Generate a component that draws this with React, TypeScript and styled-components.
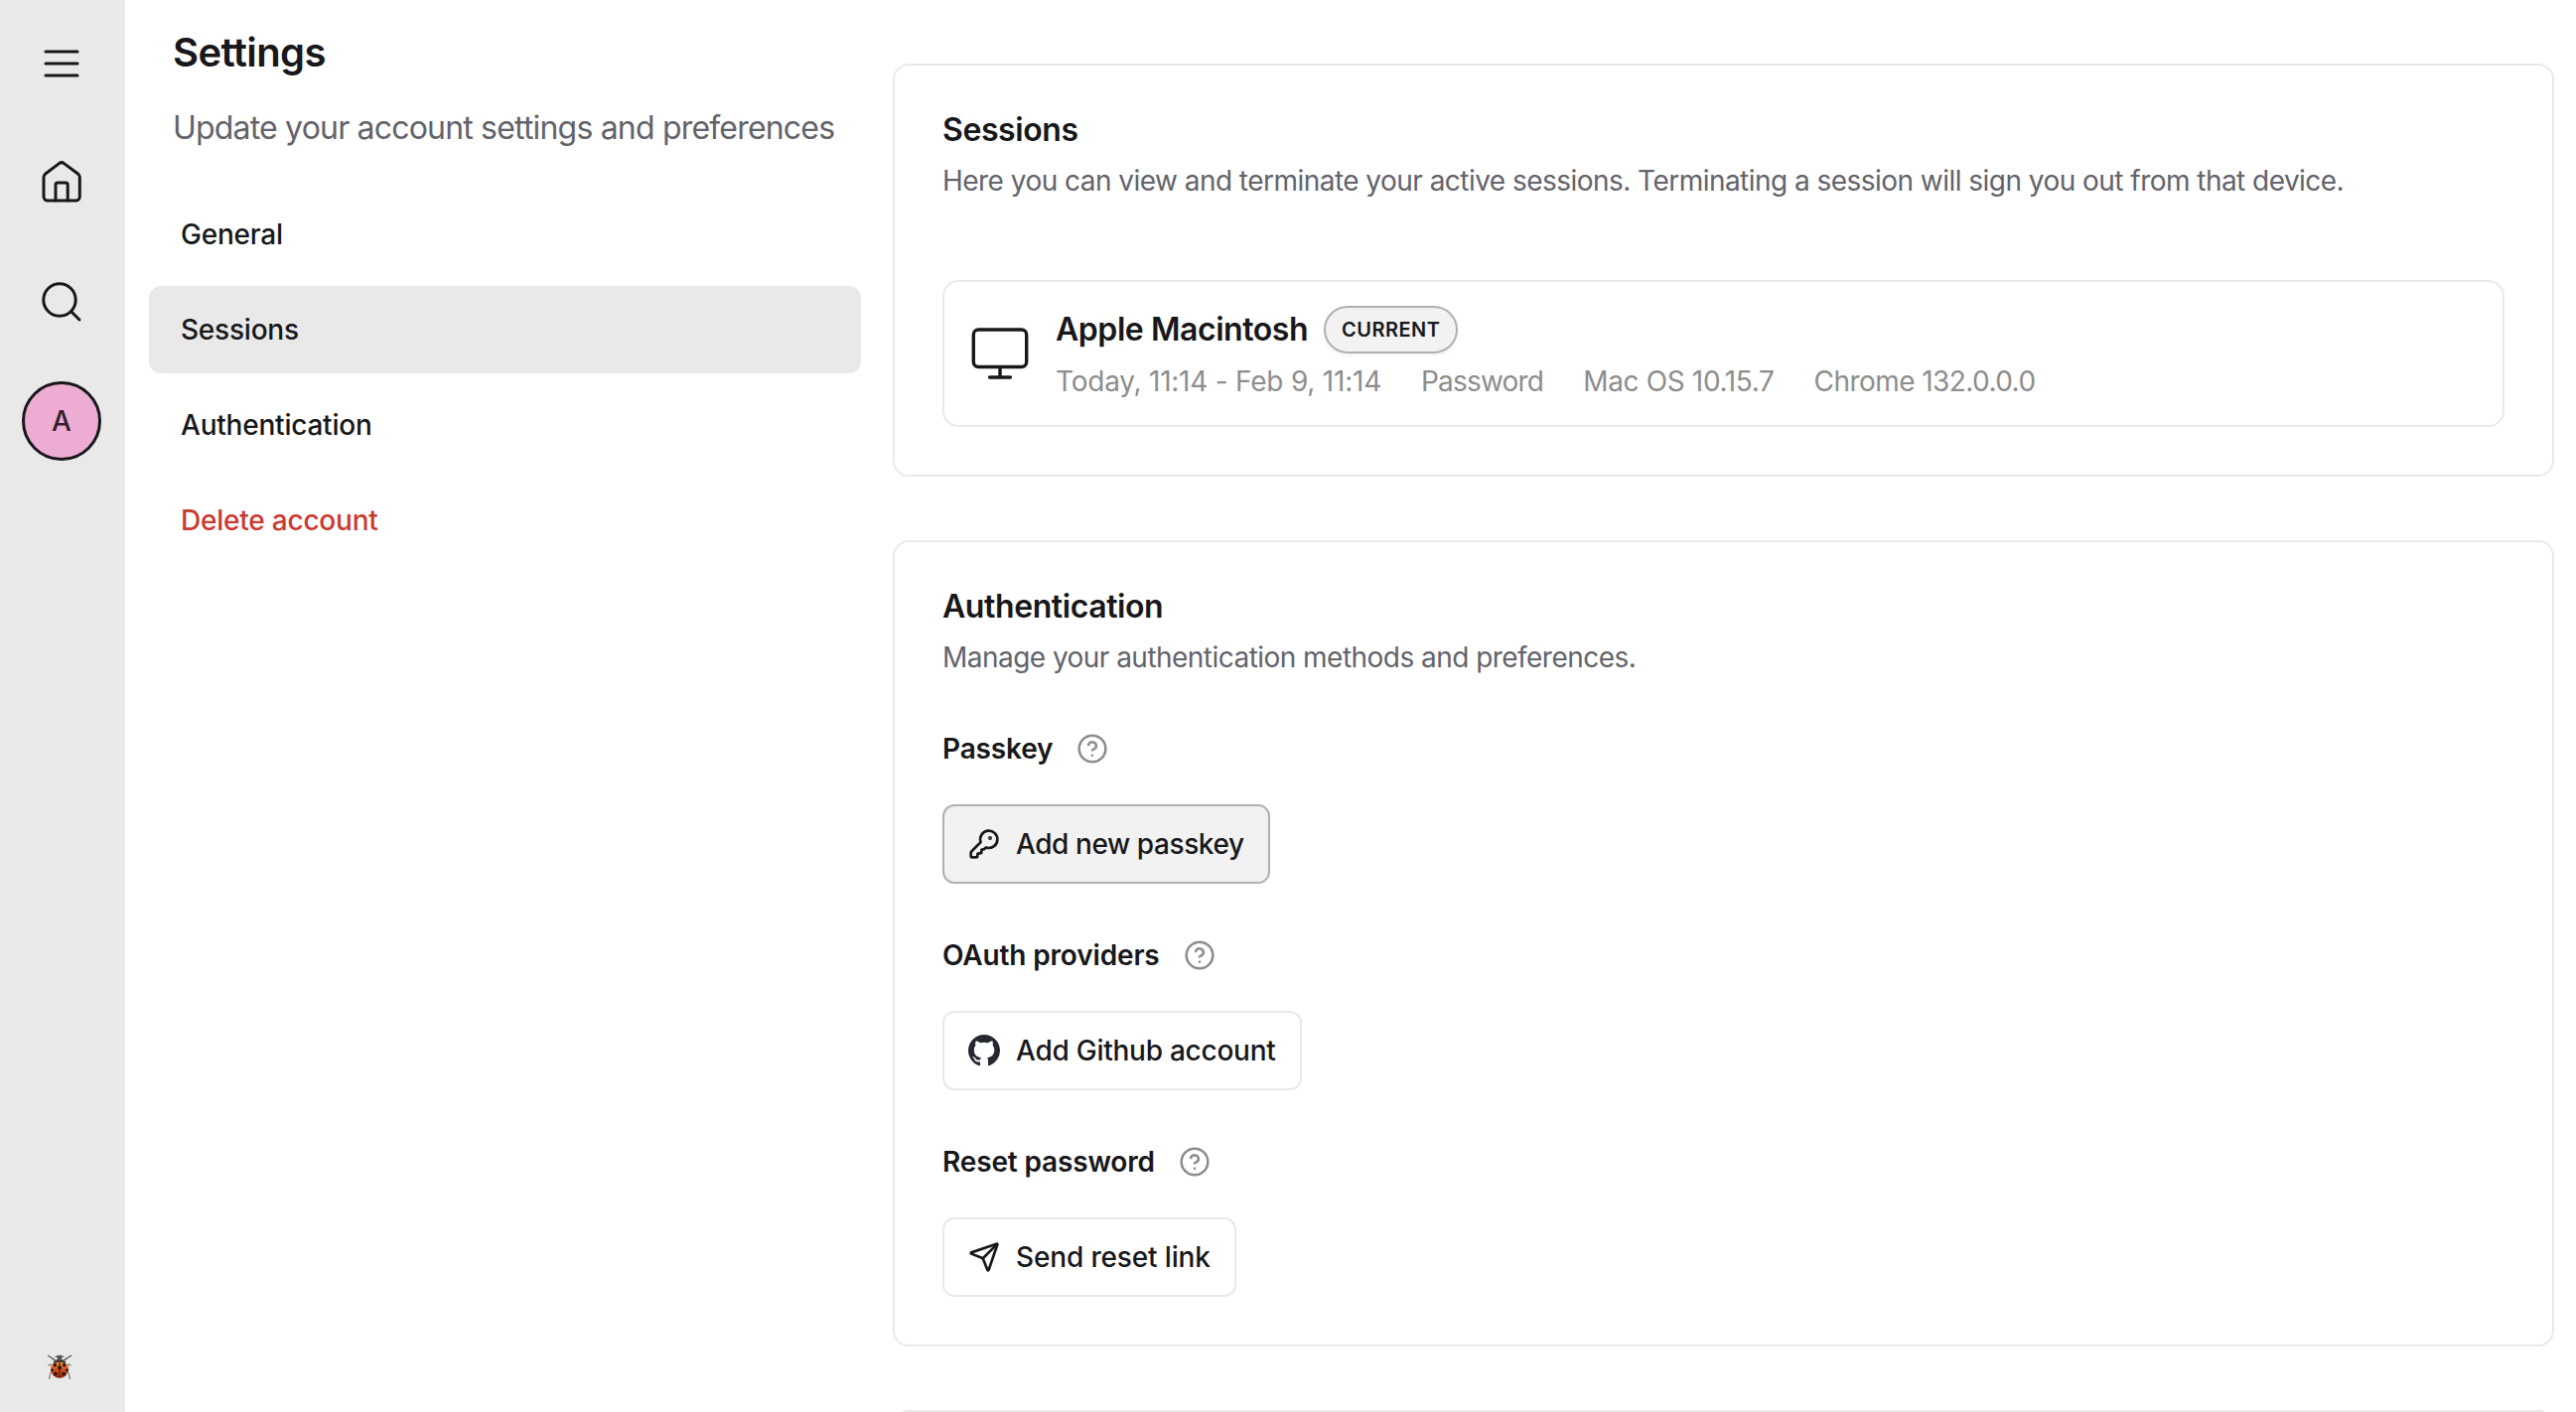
import React from 'react';
import styled, { createGlobalStyle } from 'styled-components';
import { CircleHelp, KeyRound, Send } from 'lucide-react';

const GlobalStyle = createGlobalStyle`
  * { box-sizing: border-box; }
  html, body { margin: 0; padding: 0; background: #fff; overflow: hidden; }
  body { font-family: Inter, "Liberation Sans", sans-serif; color: #18181b; -webkit-font-smoothing: antialiased; }
`;

const Page = styled.div`
  display: flex;
  width: 100vw;
  height: 100vh;
  overflow: hidden;
`;

const Rail = styled.nav`
  width: 126px;
  flex: none;
  padding: 40px 2px 20px 0;
  background: #e9e9e9;
  display: flex;
  flex-direction: column;
  align-items: center;
`;

const RailButton = styled.div<{ $gap: number }>`
  width: 48px;
  height: 48px;
  margin-bottom: ${(p) => p.$gap}px;
  svg { display: block; }
`;

const Avatar = styled.div`
  width: 80px;
  height: 80px;
  border: 3px solid #18181b;
  border-radius: 50%;
  background: #edadd3;
  color: #33202c;
  display: flex;
  align-items: center;
  justify-content: center;
  font-size: 28px;
  font-weight: 500;
`;

const Bug = styled.div`
  width: 26px;
  height: 26px;
  margin: auto 4px 12px 0;
  svg { display: block; }
`;

const Side = styled.aside`
  width: 741px;
  flex: none;
  padding: 22px 0 0 24px;
`;

const Heading = styled.h1`
  margin: 0 0 0 24px;
  font-size: 40px;
  line-height: 61px;
  font-weight: 600;
  letter-spacing: -0.6px;
`;

const Lead = styled.p`
  margin: 21px 0 0 24px;
  font-size: 32px;
  line-height: 49px;
  letter-spacing: -0.81px;
  color: #63636b;
  white-space: nowrap;
`;

const Menu = styled.div`
  display: flex;
  flex-direction: column;
  gap: 8px;
  margin-top: 39px;
`;

const MenuItem = styled.div<{ $active?: boolean; $danger?: boolean }>`
  height: 88px;
  padding: 0 32px;
  border-radius: 12px;
  display: flex;
  align-items: center;
  font-size: 28px;
  font-weight: 500;
  letter-spacing: -0.22px;
  background: ${(p) => (p.$active ? '#e9e9e9' : 'transparent')};
  color: ${(p) => (p.$danger ? '#ca3a31' : '#18181b')};
`;

const Content = styled.main`
  flex: 1;
  min-width: 0;
  padding: 64px 22px 0 32px;
  display: flex;
  flex-direction: column;
  gap: 64px;
`;

const Card = styled.section<{ $height: number }>`
  flex: none;
  height: ${(p) => p.$height}px;
  border: 2px solid #e9e9e9;
  border-radius: 16px;
  padding: 40px 48px;
`;

const CardTitle = styled.h2`
  margin: 0;
  font-size: 32px;
  line-height: 49px;
  font-weight: 600;
  letter-spacing: -0.42px;
`;

const CardText = styled.p`
  margin: 6px 0 0;
  font-size: 28px;
  line-height: 42px;
  letter-spacing: -0.535px;
  color: #63636b;
  white-space: nowrap;
`;

const SessionRow = styled.div`
  margin-top: 79px;
  height: 148px;
  border: 2px solid #e9e9e9;
  border-radius: 16px;
  padding: 0 24px;
  display: flex;
  align-items: center;
  gap: 24px;
  svg { display: block; flex: none; }
`;

const SessionBody = styled.div`
  display: flex;
  flex-direction: column;
  gap: 7px;
`;

const SessionHead = styled.div`
  display: flex;
  align-items: flex-end;
  gap: 16px;
`;

const Device = styled.span`
  font-size: 32px;
  line-height: 49px;
  font-weight: 600;
  letter-spacing: -0.44px;
`;

const Badge = styled.span`
  height: 48px;
  padding: 0 16px;
  border: 2px solid #b1b1b1;
  border-radius: 24px;
  background: #f2f2f2;
  box-shadow: 0 2px 4px rgba(0, 0, 0, 0.06);
  display: flex;
  align-items: center;
  font-size: 20px;
  font-weight: 600;
  letter-spacing: 0.45px;
`;

const Meta = styled.div`
  display: flex;
  gap: 40px;
  font-size: 28px;
  line-height: 42px;
  color: #8d8d8d;
  white-space: nowrap;
`;

const MetaItem = styled.span<{ $tracking: number }>`
  letter-spacing: ${(p) => p.$tracking}px;
`;

const Field = styled.div<{ $top: number }>`
  margin-top: ${(p) => p.$top}px;
  height: 158px;
  display: flex;
  flex-direction: column;
  justify-content: space-between;
  align-items: flex-start;
`;

const Label = styled.div`
  height: 44px;
  display: flex;
  align-items: center;
  gap: 24px;
  font-size: 28px;
  font-weight: 600;
  letter-spacing: -0.15px;
  svg { color: #8d8d8d; }
`;

const Button = styled.button<{ $hover?: boolean; $tracking: number }>`
  height: 80px;
  padding: 0 24px;
  border: 2px solid ${(p) => (p.$hover ? '#b1b1b1' : '#e9e9e9')};
  border-radius: 12px;
  background: ${(p) => (p.$hover ? '#f2f2f2' : '#fff')};
  color: #18181b;
  display: flex;
  align-items: center;
  gap: 16px;
  font-family: inherit;
  font-size: 28px;
  font-weight: 500;
  letter-spacing: ${(p) => p.$tracking}px;
  white-space: nowrap;
`;

const stroke = { fill: 'none', stroke: '#18181b', strokeLinecap: 'round', strokeLinejoin: 'round' } as const;

const MenuIcon = () => (
  <svg width="48" height="48" viewBox="0 0 48 48" {...stroke} strokeWidth="3">
    <path d="M8 12H40M8 24H40M8 36H40" />
  </svg>
);

const HomeIcon = () => (
  <svg width="48" height="48" viewBox="0 0 48 48" {...stroke} strokeWidth="3">
    <path d="M6 18.4a4 4 0 0 1 1.5-3.1L21.5 4.6a4 4 0 0 1 5 0L40.8 15.3a4 4 0 0 1 1.5 3.1V38a4 4 0 0 1-4 4H10a4 4 0 0 1-4-4z" />
    <path d="M18 42V26a2 2 0 0 1 2-2h8.200a2 2 0 0 1 2 2v16" />
  </svg>
);

const SearchIcon = () => (
  <svg width="48" height="48" viewBox="0 0 48 48" {...stroke} strokeWidth="3">
    <circle cx="22" cy="22" r="16.200" />
    <path d="M34 34L42 42" />
  </svg>
);

const MonitorIcon = () => (
  <svg width="64" height="64" viewBox="0 0 64 64" {...stroke} strokeWidth="3.400">
    <rect x="5.300" y="8" width="53.400" height="37.500" rx="5" />
    <path d="M32 46V56M21.500 56H42.500" />
  </svg>
);

const GithubIcon = () => (
  <svg width="32" height="32" viewBox="0 0 16 16" fill="#24292f">
    <path d="M8 0C3.580 0 0 3.580 0 8c0 3.540 2.290 6.530 5.470 7.590.4.070.550-.170.550-.380 0-.190-.010-.820-.010-1.490-2.010.370-2.530-.490-2.690-.940-.090-.230-.480-.940-.820-1.130-.280-.150-.680-.520-.010-.530.630-.010 1.080.580 1.230.820.720 1.210 1.870.870 2.330.660.070-.520.280-.870.510-1.070-1.780-.200-3.640-.890-3.640-3.950 0-.870.310-1.590.820-2.150-.080-.200-.360-1.020.080-2.120 0 0 .670-.210 2.200.820.640-.180 1.320-.270 2-.270s1.360.090 2 .270c1.530-1.040 2.200-.820 2.200-.820.440 1.100.160 1.920.080 2.120.510.560.820 1.270.820 2.150 0 3.070-1.870 3.750-3.650 3.950.290.250.540.730.540 1.480 0 1.070-.010 1.930-.010 2.200 0 .210.150.460.550.380A8.010 8.010 0 0 0 16 8c0-4.420-3.580-8-8-8z" />
  </svg>
);

const LadybugIcon = () => (
  <svg width="26" height="26" viewBox="0 0 26 26" fill="none">
    <defs>
      <linearGradient id="shell" x1="0" y1="0" x2="0" y2="1">
        <stop offset="0" stopColor="#e39a3c" />
        <stop offset="0.450" stopColor="#d95a22" />
        <stop offset="1" stopColor="#8e1f0c" />
      </linearGradient>
    </defs>
    <path d="M8.500 6.500L5 3.500 1 1M17.500 6.500L21 3.500 25 1" stroke="#55585c" strokeWidth="1.300" />
    <path d="M5 10L1.500 11M21 10l3.500 1M5 17l-1.500 3L2.500 25M21 17l1.500 3 1 5" stroke="#85898e" strokeWidth="1.400" />
    <ellipse cx="13" cy="4.500" rx="5.500" ry="3.800" fill="#50565c" />
    <circle cx="9.300" cy="4" r="1.500" fill="#eee" />
    <circle cx="16.700" cy="4" r="1.500" fill="#eee" />
    <ellipse cx="13" cy="15" rx="9" ry="8.800" fill="url(#shell)" />
    <path d="M7 8.300Q13 5.500 19 8.300" stroke="#3b332c" strokeWidth="1.600" />
    <path d="M13 8V23.500" stroke="#5b1c0c" strokeWidth="1" />
    <g fill="#20150f">
      <circle cx="13" cy="13.500" r="2" />
      <circle cx="8.300" cy="10.800" r="1.700" />
      <circle cx="17.700" cy="10.800" r="1.700" />
      <circle cx="5.600" cy="15.800" r="1.400" />
      <circle cx="20.400" cy="15.800" r="1.400" />
      <circle cx="8.800" cy="19.500" r="1.800" />
      <circle cx="17.200" cy="19.500" r="1.800" />
    </g>
  </svg>
);

const HelpLabel = ({ children }: { children: React.ReactNode }) => (
  <Label>
    {children}
    <CircleHelp size={32} strokeWidth={1.9} />
  </Label>
);

export default function App() {
  return (
    <>
      <GlobalStyle />
      <Page>
        <Rail>
          <RailButton $gap={72}><MenuIcon /></RailButton>
          <RailButton $gap={72}><HomeIcon /></RailButton>
          <RailButton $gap={56}><SearchIcon /></RailButton>
          <Avatar>A</Avatar>
          <Bug><LadybugIcon /></Bug>
        </Rail>
        <Side>
          <Heading>Settings</Heading>
          <Lead>Update your account settings and preferences</Lead>
          <Menu>
            <MenuItem>General</MenuItem>
            <MenuItem $active>Sessions</MenuItem>
            <MenuItem>Authentication</MenuItem>
            <MenuItem $danger>Delete account</MenuItem>
          </Menu>
        </Side>
        <Content>
          <Card $height={416}>
            <CardTitle>Sessions</CardTitle>
            <CardText>
              Here you can view and terminate your active sessions. Terminating a session will sign you out from that device.
            </CardText>
            <SessionRow>
              <MonitorIcon />
              <SessionBody>
                <SessionHead>
                  <Device>Apple Macintosh</Device>
                  <Badge>CURRENT</Badge>
                </SessionHead>
                <Meta>
                  <MetaItem $tracking={-0.23}>Today, 11:14 - Feb 9, 11:14</MetaItem>
                  <MetaItem $tracking={-0.8}>Password</MetaItem>
                  <MetaItem $tracking={-0.35}>Mac OS 10.15.7</MetaItem>
                  <MetaItem $tracking={-0.57}>Chrome 132.0.0.0</MetaItem>
                </Meta>
              </SessionBody>
            </SessionRow>
          </Card>
          <Card $height={812}>
            <CardTitle>Authentication</CardTitle>
            <CardText>Manage your authentication methods and preferences.</CardText>
            <Field $top={49}>
              <HelpLabel>Passkey</HelpLabel>
              <Button $hover $tracking={-0.42}><KeyRound size={32} strokeWidth={2} />Add new passkey</Button>
            </Field>
            <Field $top={50}>
              <HelpLabel>OAuth providers</HelpLabel>
              <Button $tracking={-0.25}><GithubIcon />Add Github account</Button>
            </Field>
            <Field $top={50}>
              <HelpLabel>Reset password</HelpLabel>
              <Button $tracking={-0.15}><Send size={32} strokeWidth={2} />Send reset link</Button>
            </Field>
          </Card>
          <Card $height={200} />
        </Content>
      </Page>
    </>
  );
}
